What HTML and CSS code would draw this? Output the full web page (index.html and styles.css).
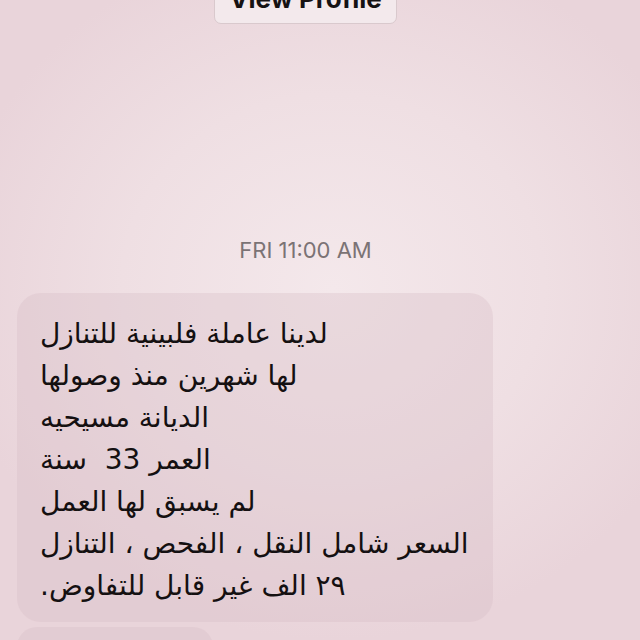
FILE: index.html
```html
<!DOCTYPE html>
<html lang="ar">
<head>
<meta charset="utf-8">
<title>Messages</title>
<link rel="stylesheet" href="styles.css">
</head>
<body>
<div class="screen">
  <div class="header">
    <button class="profile-btn" type="button">View Profile</button>
  </div>
  <div class="timestamp">FRI 11:00 AM</div>
  <div class="thread">
    <div class="bubble" dir="rtl">
      <div class="line">لدينا عاملة فلبينية للتنازل</div>
      <div class="line">لها شهرين منذ وصولها</div>
      <div class="line">الديانة مسيحيه</div>
      <div class="line">العمر 33&nbsp; سنة</div>
      <div class="line">لم يسبق لها العمل</div>
      <div class="line">السعر شامل النقل ، الفحص ، التنازل</div>
      <div class="line">٢٩ الف غير قابل للتفاوض.</div>
    </div>
    <div class="bubble bubble-next"></div>
  </div>
</div>
</body>
</html>
```
FILE: styles.css
```css
html, body {
  margin: 0;
  padding: 0;
}
body {
  width: 640px;
  height: 640px;
  overflow: hidden;
  background: radial-gradient(ellipse 60% 55% at 52% 45%, #f4e8eb 0%, #efdfe3 55%, #e9d4da 100%);
  font-family: "DejaVu Sans", sans-serif;
}
.screen {
  display: flex;
  flex-direction: column;
}
.header {
  display: flex;
  justify-content: center;
  padding-right: 29px;
  height: 24px;
  align-items: flex-end;
}
.profile-btn {
  flex: none;
  width: 183px;
  height: 46px;
  margin: 0;
  padding: 0;
  border: 1.5px solid #d9c9cd;
  border-radius: 7px;
  background: #f3e9ec;
  font-family: "Inter", "Liberation Sans", sans-serif;
  font-weight: 700;
  font-size: 26px;
  color: #161213;
  line-height: 1;
  padding-bottom: 4px;
}
.timestamp {
  margin-top: 213px;
  padding-right: 29px;
  text-align: center;
  font-family: "Inter", "Liberation Sans", sans-serif;
  font-size: 22px;
  color: #7b7375;
  line-height: 26px;
}
.thread {
  margin-top: 30px;
  padding-left: 17px;
  display: flex;
  flex-direction: column;
  align-items: flex-start;
  gap: 5px;
}
.bubble {
  background: rgba(214, 190, 197, 0.35);
  border-radius: 24px;
  padding: 20px 24px 15px 23px;
  text-align: left;
  color: #141011;
  font-size: 28px;
  line-height: 42px;
  white-space: nowrap;
}
.bubble-next {
  width: 196px;
  height: 40px;
  padding: 0;
}
```
